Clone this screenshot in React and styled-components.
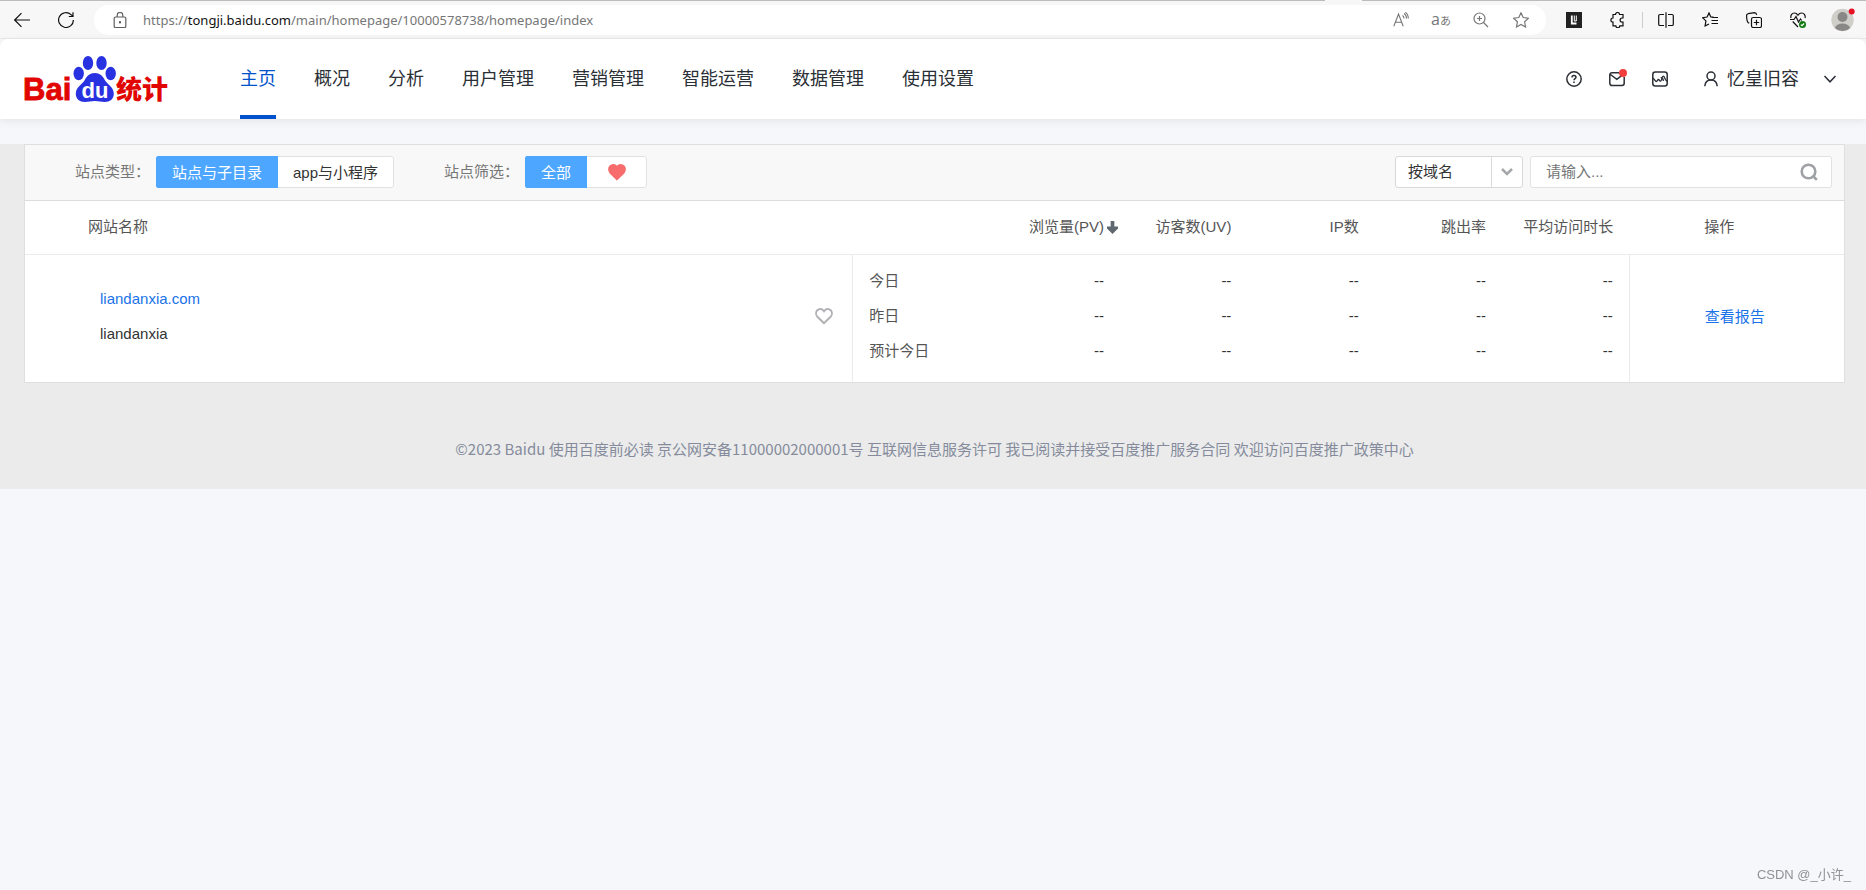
import React, { useState } from 'react';
import styled, { createGlobalStyle } from 'styled-components';


const menus = ['主页', '概况', '分析', '用户管理', '营销管理', '智能运营', '数据管理', '使用设置'];
const days = ['今日', '昨日', '预计今日'];
const metrics = ['pv', 'uv', 'ip', 'bounce', 'time'];

function Heart({ size, fill, stroke }) {
    return (
        <svg width={size} height={size} viewBox="0 0 18 18" fill={fill} stroke={stroke} strokeWidth="2" aria-hidden="true">
            <path d="M9 16.200 2.400 9.800C.6 7.800.8 4.800 2.300 3.200c1.700-1.700 4.600-1.600 6 .2l.7.9.7-.9c1.400-1.800 4.300-1.900 6-.2 1.500 1.600 1.700 4.600-.1 6.600z" />
        </svg>
    )
}

function Logo() {
    return (
        <LogoSvg viewBox="0 -2 146 50" role="img" aria-label="百度统计">
            <text x="0" y="43.500" fontSize="31" fontWeight="700" fill="#e10602" stroke="#e10602" strokeWidth=".8">Bai</text>
            <g fill="#2932e1">
                <ellipse cx="55.700" cy="17.500" rx="5.200" ry="6.700" />
                <ellipse cx="65" cy="7" rx="5.200" ry="7" />
                <ellipse cx="78.500" cy="7" rx="5.200" ry="7" />
                <ellipse cx="87.700" cy="17.500" rx="5.200" ry="6.700" />
                <path d="M71.800 17c5 0 8 3 10 7 3 5 9 7 9 14 0 5-4 8-9 8-4 0-6-1-10-1s-6 1-10 1c-5 0-9-3-9-8 0-7 6-9 9-14 2-4 5-7 10-7z" />
            </g>
            <text x="58.500" y="41.500" fontSize="22" fontWeight="700" fill="#fff">du</text>
            <text x="93" y="42.500" fontSize="26" fontWeight="900" fill="#e10602">统计</text>
        </LogoSvg>
    )
}

function Browser() {
    return (
        <BrowserBar>
            <BarButton aria-label="后退">
                <Icon viewBox="0 0 16 16"><path d="M16 8H.7M7.500 1.200.7 8l6.800 6.800" /></Icon>
            </BarButton>
            <BarButton aria-label="刷新">
                <Icon viewBox="0 0 16 16"><path d="M15.400 8A7.400 7.400 0 1 1 13 2.600l1.800 1.700M15 .3v4.200h-4.200" /></Icon>
            </BarButton>
            <Address>
                <Icon viewBox="0 0 16 16" $color="#5f5f5f">
                    <path d="M3.500 5h9a1.300 1.300 0 0 1 1.300 1.300v7.900a1.300 1.300 0 0 1-1.300 1.300h-9a1.300 1.300 0 0 1-1.300-1.300V6.300A1.300 1.300 0 0 1 3.500 5zM5.200 5V3.200a2.800 2.800 0 0 1 5.600 0V5" />
                    <circle cx="8" cy="10.200" r=".6" fill="#5f5f5f" />
                </Icon>
                <Url>https://<b>tongji.baidu.com</b>/main/homepage/10000578738/homepage/index</Url>
                <BarButton $small aria-label="朗读">
                    <Icon viewBox="0 0 16 16" $color="#767676"><path d="M.8 14.300 5.500 2l4.700 12.300M2.400 10.200h6.200M9.500 3.500c1 .7 1.500 1.700 1.500 3M11 1.500c1.700 1 2.500 2.700 2.500 5M12.300.3c2 1.300 3 3.200 3 6.200" strokeWidth="1.100" /></Icon>
                </BarButton>
                <BarButton $small aria-label="翻译"><Aa>a<small>あ</small></Aa></BarButton>
                <BarButton $small aria-label="缩放">
                    <Icon viewBox="0 0 16 16" $color="#767676"><circle cx="6.500" cy="6.500" r="5.500" /><path d="m10.500 10.500 4.500 4.500M6.500 4v5M4 6.500h5" /></Icon>
                </BarButton>
                <BarButton $small aria-label="收藏">
                    <Icon viewBox="0 0 16 16" $color="#767676"><path d="m8 .8 2.200 4.700 5.200.7-3.800 3.600.9 5.200L8 12.500 3.500 15l.9-5.200L.6 6.200l5.200-.7z" /></Icon>
                </BarButton>
            </Address>
            <BarButton aria-label="扩展">
                <Icon viewBox="0 0 16 16" $color="#fff">
                    <path d="M0 0h16v16H0z" fill="#222" stroke="none" />
                    <path d="M5.800 3.500v8h4.700" strokeWidth="1.800" />
                    <path d="M8.300 3.500v5.500h2V3.500" strokeWidth="1" />
                </Icon>
            </BarButton>
            <BarButton aria-label="扩展管理">
                <Icon viewBox="0 0 16 16"><path d="M3 2.500h2.500a2 2 0 0 1 4 0H13V6h-.8a2 2 0 0 0 0 4.200h.8v3.600H9.800a2 2 0 0 1-4 0H3v-3.600a2.100 2.100 0 0 1 0-4.200z" /></Icon>
            </BarButton>
            <Divider />
            <BarButton aria-label="分屏">
                <Icon viewBox="0 0 16 16"><path d="M6 2.500H2A1.300 1.300 0 0 0 .7 3.800v8.400A1.300 1.300 0 0 0 2 13.500h4M10 2.500h4a1.300 1.300 0 0 1 1.300 1.300v8.400a1.300 1.300 0 0 1-1.300 1.300h-4M8 .3v15.400" /></Icon>
            </BarButton>
            <BarButton aria-label="收藏夹">
                <Icon viewBox="0 0 16 16"><path d="M11.500 5.200 8.800 4.900 7 .9 5.100 5 .6 5.700l3.300 3.200-.8 5.100L7 12M10 5.500h6M9.500 8.500H16M9.500 11.500H16" /></Icon>
            </BarButton>
            <BarButton aria-label="集锦">
                <Icon viewBox="0 0 16 16"><rect x="5.500" y="5.500" width="10" height="10" rx="1.800" /><path d="M10.500 7.800v5.400M7.800 10.500h5.400M3.300 11.300 2 10.500C1.200 9.500.6 4.500.6 3.300S1.300 2 2.300 1.700L8.500.6c1.200 0 1.900.5 2.200 2.200" /></Icon>
            </BarButton>
            <BarButton aria-label="浏览器概要">
                <Icon viewBox="0 0 16 16">
                    <path d="M1 6C.3 3.500 1.800 1 4.300 1 6 1 7.200 1.900 8 3.200 8.800 1.900 10 1 11.700 1c2.500 0 4 2.500 3.300 5M2.700 9.500 8 15M0 7.500h4l2-3 2.500 5.500 2-3 1.200 1.500" />
                    <circle cx="12.500" cy="12.500" r="3.500" fill="#107c10" stroke="none" />
                    <path d="m10.800 12.600 1.200 1.100 2.100-2.200" stroke="#fff" />
                </Icon>
            </BarButton>
            <Avatar aria-label="个人资料">
                <svg width="24" height="24" viewBox="0 0 24 24">
                    <circle cx="11.500" cy="12" r="11.200" fill="#d0cec9" />
                    <circle cx="11.500" cy="9" r="5" fill="#8a8886" />
                    <path d="M3.800 20c1-3 4-4.500 7.700-4.500s6.700 1.500 7.700 4.500a11.200 11.200 0 0 1-15.400 0z" fill="#8a8886" />
                    <circle cx="20.700" cy="3.500" r="3" fill="#e81123" />
                </svg>
            </Avatar>
        </BrowserBar>
    )
}

function Header() {
    const [active, setActive] = useState('主页');
    return (
        <Top>
            <Logo />
            <Nav>
                {menus.map((menu) => (
                    <NavLink key={menu} href="#" $active={menu === active} onClick={() => setActive(menu)}>{menu}</NavLink>
                ))}
            </Nav>
            <Tools>
                <ToolButton aria-label="帮助">
                    <Icon viewBox="0 0 16 16" $color="#2b2f36" $width="1.500">
                        <circle cx="8" cy="8" r="7.200" />
                        <path d="M6 6.500C6 5.200 6.900 4.500 8 4.500s2 .7 2 1.800c0 1.300-2 1.500-2 3M8 10.600v1.300" />
                    </Icon>
                </ToolButton>
                <ToolButton aria-label="消息">
                    <Icon viewBox="0 0 16 16" $color="#2b2f36" $width="1.500"><path d="M10 1.700H3A2.200 2.200 0 0 0 .8 3.900v8.400A2.200 2.200 0 0 0 3 14.500h10a2.200 2.200 0 0 0 2.200-2.200V6M1.500 3.500 7.800 8.300 13 4.300" /></Icon>
                    <RedDot />
                </ToolButton>
                <ToolButton aria-label="数据">
                    <Icon viewBox="0 0 16 16" $color="#2b2f36" $width="1.500">
                        <rect x=".8" y="1" width="14.400" height="14" rx="2.500" />
                        <path d="M1 7.500c1.500 0 2 3 3.300 3 1.200 0 1.200-2 2.200-2s1 1.700 2 1.700C10 10.200 9.500 5.200 11.300 5.200c1.600 0 1.500 4.800 3.900 4.800M8.800 7c1-1 2.700.8 2.500 3" strokeWidth="1.300" />
                    </Icon>
                </ToolButton>
            </Tools>
            <User>
                <Icon viewBox="0 0 16 16" $color="#2b2f36" $width="1.500"><circle cx="8" cy="5" r="4" /><path d="M1.800 15.300C2 11.500 4.500 9 8 9s6 2.500 6.200 6.300" /></Icon>
                <span>忆皇旧容</span>
                <Arrow viewBox="0 0 16 16" $color="#2b2f36" $width="1.500"><path d="M2.500 5 8 10.800 13.500 5" /></Arrow>
            </User>
        </Top>
    )
}

function Filters() {
    const [type, setType] = useState('site');
    const [only, setOnly] = useState('all');
    return (
        <Toolbar>
            <Label>站点类型：</Label>
            <Group>
                <GroupButton $on={type === 'site'} onClick={() => setType('site')}>站点与子目录</GroupButton>
                <GroupButton $on={type === 'app'} onClick={() => setType('app')}>app与小程序</GroupButton>
            </Group>
            <Label $second>站点筛选：</Label>
            <Group>
                <GroupButton $on={only === 'all'} onClick={() => setOnly('all')}>全部</GroupButton>
                <GroupButton $on={only === 'like'} onClick={() => setOnly('like')} aria-label="关注">
                    <Heart size={18} fill="#f76c6c" stroke="#f76c6c" />
                </GroupButton>
            </Group>
            <SelectBox>
                <Select aria-label="搜索方式">
                    <option>按域名</option>
                </Select>
                <SelectArrow><svg width="12" height="8" viewBox="0 0 12 8" fill="none" stroke="#a6a8ab" strokeWidth="2.600"><path d="m1 1 5 5 5-5" /></svg></SelectArrow>
            </SelectBox>
            <Search>
                <Input type="text" placeholder="请输入..." aria-label="请输入" />
                <SearchButton aria-label="搜索">
                    <svg width="18" height="18" viewBox="0 0 18 18" fill="none" stroke="#9fa1a4" strokeWidth="2.600"><circle cx="8.500" cy="8.500" r="6.800" /><path d="m12.500 12.500 4.300 4.300" /></svg>
                </SearchButton>
            </Search>
        </Toolbar>
    )
}

function Sites() {
    return (
        <Table>
            <colgroup>
                <Col $width="45.5%" />
                <Col />
                {metrics.map((m) => <Col key={m} $width="7%" />)}
                <Col $width="11.8%" />
            </colgroup>
            <thead>
                <tr>
                    <Th $name>网站名称</Th>
                    <Th />
                    <Th $right $sorted>
                        浏览量(PV)
                        <SortIcon viewBox="0 0 12 14"><path d="M4 0h4v6h4v2L6 14 0 8V6h4z" fill="#5f6870" /></SortIcon>
                    </Th>
                    <Th $right>访客数(UV)</Th>
                    <Th $right>IP数</Th>
                    <Th $right>跳出率</Th>
                    <Th $right>平均访问时长</Th>
                    <Th $action>操作</Th>
                </tr>
            </thead>
            <tbody>
                {days.map((day, i) => (
                    <Row key={day} $pos={i}>
                        {i === 0 && (
                            <NameCell rowSpan={3}>
                                <Site>
                                    <div>
                                        <a href="#">liandanxia.com</a>
                                        <p>liandanxia</p>
                                    </div>
                                    <LikeButton aria-label="关注"><Heart size={18} fill="none" stroke="#b0b2b5" /></LikeButton>
                                </Site>
                            </NameCell>
                        )}
                        <Td $day>{day}</Td>
                        {metrics.map((m) => <Td key={m}>--</Td>)}
                        {i === 0 && <ActionCell rowSpan={3}><a href="#">查看报告</a></ActionCell>}
                    </Row>
                ))}
            </tbody>
        </Table>
    )
}

function App() {
    return (
        <>
            <GlobalStyle />
            <Browser />
            <Header />
            <Main>
                <Panel>
                    <Filters />
                    <Sites />
                </Panel>
                <Footer>
                    ©2023 Baidu 使用百度前必读 京公网安备11000002000001号 互联网信息服务许可 我已阅读并接受百度推广服务合同 欢迎访问百度推广政策中心
                </Footer>
            </Main>
            <Watermark>CSDN @_小许_</Watermark>
        </>
    )
}

const GlobalStyle = createGlobalStyle
    `
    * {
        box-sizing: border-box;
    }
    body {
        margin: 0;
        background: #f5f7fb;
        font-family: "Liberation Sans", "Noto Sans CJK SC", sans-serif;
        font-size: 15px;
        color: #333;
    }
    button, input, select {
        font: inherit;
        color: inherit;
        border: 0;
        padding: 0;
        margin: 0;
        background: none;
    }
    a {
        color: #1a73e8;
        text-decoration: none;
    }
    p {
        margin: 0;
    }
`

const BrowserBar = styled.div
    `
    display: flex;
    align-items: center;
    height: 39px;
    padding-top: 2px;
    background: linear-gradient(90deg, #bdbbbd 71%, #f7f7f7 71%, #f7f7f7 73%, #bdbbbd 73%) top / 100% 1px no-repeat #f7f7f7;
    border-bottom: 1px solid #e9e9e9;
`

const BarButton = styled.button
    `
    width: ${(props) => (props.$small ? 40 : 44)}px;
    height: 30px;
    display: flex;
    justify-content: center;
    align-items: center;
`

const Icon = styled.svg
    `
    width: 16px;
    height: 16px;
    flex: none;
    fill: none;
    stroke: ${(props) => props.$color || '#111'};
    stroke-width: ${(props) => props.$width || 1.2};
`

const Address = styled.div
    `
    flex: 1;
    display: flex;
    align-items: center;
    height: 30px;
    margin: 0 6px;
    padding: 0 5px 0 18px;
    border-radius: 15px;
    background: #fff;
`

const Url = styled.span
    `
    flex: 1;
    margin-left: 15px;
    font-family: "Noto Sans", sans-serif;
    font-size: 13px;
    color: #767676;

    b {
        font-weight: 400;
        color: #111;
    }
`

const Aa = styled.span
    `
    font-family: "Open Sans", "Noto Sans CJK JP", sans-serif;
    font-size: 16px;
    line-height: 20px;
    color: #767676;

    small {
        font-size: 11px;
    }
`

const Divider = styled.span
    `
    width: 1px;
    height: 16px;
    margin: 0 1px 0 2px;
    background: #ccc;
`

const Avatar = styled(BarButton)
    `
    width: 46px;
`

const Top = styled.header
    `
    position: relative;
    display: flex;
    align-items: center;
    height: 80px;
    padding: 0 28px 0 23px;
    background: #fff;
    border-radius: 8px 8px 0 0;
    box-shadow: 0 2px 8px rgba(0, 0, 0, 0.08);
`

const LogoSvg = styled.svg
    `
    width: 146px;
    height: 50px;
    flex: none;
    overflow: visible;
    font-family: "Liberation Sans", "Noto Sans CJK SC", sans-serif;
`

const Nav = styled.nav
    `
    flex: 1;
    display: flex;
    gap: 38px;
    height: 100%;
    margin-left: 71px;
`

const NavLink = styled.a
    `
    line-height: 80px;
    height: 80px;
    font-size: 18px;
    color: ${(props) => (props.$active ? '#0052cc' : '#2b2f36')};
    background: ${(props) => (props.$active ? 'linear-gradient(#0052cc, #0052cc) bottom / 100% 4px no-repeat' : 'none')};
`

const Tools = styled.div
    `
    display: flex;
    gap: 27px;
`

const ToolButton = styled.button
    `
    position: relative;
    display: flex;
`

const RedDot = styled.span
    `
    position: absolute;
    top: -2px;
    right: -2px;
    width: 8px;
    height: 8px;
    border-radius: 50%;
    background: #f33e3e;
`

const User = styled.button
    `
    display: flex;
    align-items: center;
    gap: 8px;
    margin-left: 35px;
    font-size: 18px;
    line-height: 28px;
    color: #2b2f36;
`

const Arrow = styled(Icon)
    `
    margin-left: 15px;
`

const Main = styled.main
    `
    margin-top: 25px;
    padding: 0 21px 0 24px;
    background: #ebebeb;
`

const Panel = styled.section
    `
    background: #fff;
    border: 1px solid #dfdfdf;
`

const Toolbar = styled.div
    `
    display: flex;
    align-items: center;
    height: 56px;
    padding: 0 12px 2px 50px;
    background: #f8f8f8;
    border-bottom: 1px solid #dcdcdc;
`

const Label = styled.span
    `
    width: 81px;
    margin-left: ${(props) => (props.$second ? 50 : 0)}px;
    line-height: 24px;
    color: #777;
`

const Group = styled.div
    `
    display: flex;
    height: 32px;
    border-radius: 3px;
    overflow: hidden;
`

const GroupButton = styled.button
    `
    min-width: 60px;
    padding: 0 15px;
    display: flex;
    justify-content: center;
    align-items: center;
    color: ${(props) => (props.$on ? '#fff' : '#333')};
    background: ${(props) => (props.$on ? '#4da6ff' : '#fff')};
    border: 1px solid ${(props) => (props.$on ? '#4da6ff' : '#e2e2e2')};

    &:last-child {
        border-left: 0;
        border-radius: 0 3px 3px 0;
    }
`

const SelectBox = styled.div
    `
    position: relative;
    width: 128px;
    height: 32px;
    margin: 0 7px 0 auto;
    background: #fff;
    border: 1px solid #d9d9d9;
    border-radius: 3px;
`

const Select = styled.select
    `
    appearance: none;
    width: 100%;
    height: 100%;
    padding: 0 36px 0 12px;
`

const SelectArrow = styled.span
    `
    position: absolute;
    top: 0;
    right: 0;
    width: 31px;
    height: 100%;
    display: flex;
    justify-content: center;
    align-items: center;
    border-left: 1px solid #d9d9d9;
    pointer-events: none;
`

const Search = styled.div
    `
    display: flex;
    align-items: center;
    width: 302px;
    height: 32px;
    background: #fff;
    border: 1px solid #e2e2e2;
    border-radius: 3px;
`

const Input = styled.input
    `
    flex: 1;
    min-width: 0;
    height: 100%;
    padding-left: 15px;

    &::placeholder {
        color: #777;
    }
`

const SearchButton = styled.button
    `
    display: flex;
    margin-right: 13px;
`

const Table = styled.table
    `
    width: 100%;
    table-layout: fixed;
    border-collapse: collapse;
    color: #555;
`

const Col = styled.col
    `
    width: ${(props) => props.$width || 'auto'};
`

const Th = styled.th
    `
    height: 53px;
    padding: 0 ${(props) => (props.$sorted ? 2 : 16)}px 3px ${(props) => (props.$name ? 63 : props.$action ? 75 : 0)}px;
    text-align: ${(props) => (props.$right ? 'right' : 'left')};
    font-weight: 400;
    white-space: nowrap;
    border-bottom: 1px solid #ebebeb;
`

const SortIcon = styled.svg
    `
    width: 11px;
    height: 13px;
    margin-left: 3px;
    vertical-align: -2px;
`

const Row = styled.tr
    `
    height: ${(props) => [44, 35, 49][props.$pos]}px;
    vertical-align: ${(props) => ['bottom', 'middle', 'top'][props.$pos]};
`

const Td = styled.td
    `
    padding: 0 16px;
    line-height: 35px;
    text-align: ${(props) => (props.$day ? 'left' : 'right')};
    color: ${(props) => (props.$day ? '#555' : '#333')};
    white-space: nowrap;
`

const NameCell = styled.td
    `
    padding: 0 19px 5px 75px;
    vertical-align: middle;
    border-right: 1px solid #ebebeb;
`

const Site = styled.div
    `
    display: flex;
    align-items: center;
    justify-content: space-between;
    line-height: 35px;
    color: #333;
`

const LikeButton = styled.button
    `
    display: flex;
`

const ActionCell = styled.td
    `
    padding: 0 0 5px 75px;
    vertical-align: middle;
    border-left: 1px solid #ebebeb;
`

const Footer = styled.footer
    `
    padding: 54px 0 28px;
    text-align: center;
    font-family: "Noto Sans CJK SC", sans-serif;
    line-height: 24px;
    color: #858b9c;
`

const Watermark = styled.span
    `
    position: fixed;
    right: 15px;
    bottom: 5px;
    font-size: 13px;
    line-height: 20px;
    color: #8f9195;
`

export default App;
